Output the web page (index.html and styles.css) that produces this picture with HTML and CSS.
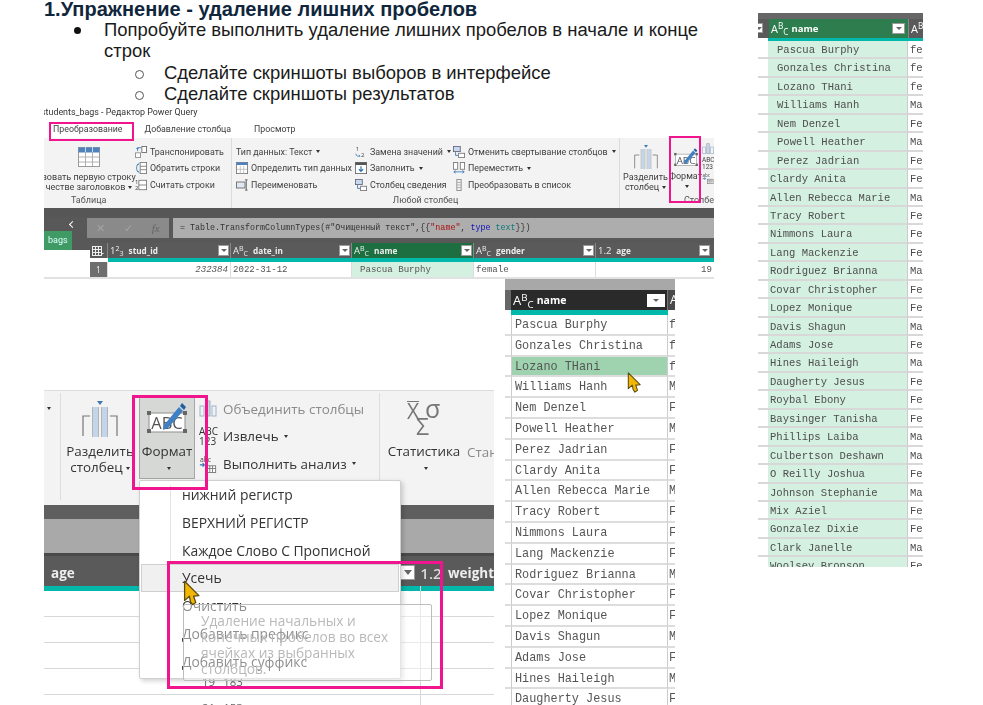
FILE: index.html
```html
<!DOCTYPE html>
<html lang="ru">
<head>
<meta charset="utf-8">
<title>Упражнение</title>
<link rel="stylesheet" href="styles.css">
</head>
<body>
<svg class="defs" width="0" height="0">
  <symbol id="cur" viewBox="0 0 16 24">
    <path d="M1.5 1 L1.5 19 L6 15 L7 20 L9 23 L12 21 L10 15 L15 14.5 Z" fill="#f2b705" stroke="#5c4a10" stroke-width="1.2" stroke-linejoin="round"/>
  </symbol>
  <symbol id="bigtable" viewBox="0 0 22 20">
    <rect x=".5" y=".5" width="21" height="19" fill="#fff" stroke="#9a9a9a"/>
    <rect x=".5" y=".5" width="21" height="5" fill="#4f81bd"/>
    <path d="M7.5 5v14M14.5 5v14M1 10h20M1 15h20" stroke="#b0b0b0" fill="none"/>
    <path d="M7.5 0v5M14.5 0v5" stroke="#c6d9ee" fill="none"/>
  </symbol>
  <symbol id="split" viewBox="0 0 36 36">
    <path d="M1 35V15H8M35 35V15H28" fill="none" stroke="#777" stroke-width="1.2"/>
    <rect x="11" y="6" width="5" height="30" fill="#c3d5e8"/>
    <rect x="20" y="6" width="5" height="30" fill="#c3d5e8"/>
    <path d="M10.5 36V6M16.5 36V6M19.5 36V6M25.5 36V6" stroke="#b4b4b4" fill="none"/>
    <path d="M15 0h6l-3 4z" fill="#3c78b4"/>
  </symbol>
  <symbol id="abc" viewBox="0 0 40 32">
    <rect x="2" y="12" width="36" height="19" fill="#fff" stroke="#8d8d8d"/>
    <rect x="0" y="10" width="4" height="4" fill="#666"/><rect x="36" y="10" width="4" height="4" fill="#666"/>
    <rect x="0" y="28" width="4" height="4" fill="#666"/><rect x="36" y="28" width="4" height="4" fill="#666"/>
    <text x="20" y="28" text-anchor="middle" class="abct">ABC</text>
    <path d="M17 24 L32 6 L36 10 L21 27 L16 29 Z" fill="#3f7fc4"/>
    <path d="M33 5 L35 2 L39 6 L37 9 Z" fill="#1f5f9f"/>
  </symbol>
  <symbol id="grid" viewBox="0 0 12 12">
    <rect x=".5" y="1.5" width="9" height="9" fill="none" stroke="#eee"/>
    <path d="M.5 4.5h9M.5 7.5h9M3.5 2v8M6.5 2v8" stroke="#eee"/>
    <path d="M9.5 8h2.5l-1.2 1.6z" fill="#eee"/>
  </symbol>
  <symbol id="trans" viewBox="0 0 14 14">
    <rect x="8" y=".5" width="5.5" height="7" fill="#fff" stroke="#666"/>
    <rect x=".5" y="8" width="6" height="5.5" fill="#fff" stroke="#888"/>
    <path d="M3 6V2h4M3 2 1.5 3.5M3 2l1 1.5" stroke="#3a78b8" fill="none"/>
  </symbol>
  <symbol id="rev" viewBox="0 0 14 14">
    <rect x="6" y=".5" width="7.5" height="13" fill="#fff" stroke="#777"/>
    <path d="M6 5h7.5M6 9h7.5" stroke="#777"/>
    <path d="M4.5 2C1 2 1 12 4.5 12M4.5 12 3 10M4.5 2 3 4" stroke="#3a78b8" fill="none"/>
  </symbol>
  <symbol id="count" viewBox="0 0 14 14">
    <rect x="4.5" y="1.5" width="9" height="11" fill="#fff" stroke="#777"/>
    <path d="M4.5 7h9" stroke="#777"/>
    <text x="0" y="6" class="tiny">1</text><text x="0" y="13" class="tiny">2</text>
  </symbol>
  <symbol id="detect" viewBox="0 0 14 14">
    <rect x=".5" y=".5" width="13" height="13" fill="#fff" stroke="#777"/>
    <rect x=".5" y=".5" width="13" height="3" fill="#4f81bd"/>
    <path d="M5 4.5v9M9 4.5v9M1 8.5h12" stroke="#bbb"/>
  </symbol>
  <symbol id="rename" viewBox="0 0 14 14">
    <rect x=".5" y="3.5" width="10" height="7" fill="#dfe8f2" stroke="#666"/>
    <path d="M12 1v12M10.5 1h3M10.5 13h3" stroke="#555" fill="none"/>
  </symbol>
  <symbol id="repl" viewBox="0 0 14 14">
    <text x="1" y="6" class="tiny">1</text><text x="7" y="13" class="tiny">2</text>
    <path d="M1 9c0 3 3 3 5 3M6 12 4.5 10.5" stroke="#3a78b8" fill="none"/>
  </symbol>
  <symbol id="fill" viewBox="0 0 14 14">
    <rect x=".5" y=".5" width="13" height="13" fill="#fff" stroke="#666"/>
    <rect x=".5" y=".5" width="13" height="3" fill="#555"/>
    <path d="M7 5v6M4.5 8.5 7 11l2.5-2.5" stroke="#2e74b5" stroke-width="1.4" fill="none"/>
  </symbol>
  <symbol id="pivot" viewBox="0 0 14 14">
    <rect x=".5" y=".5" width="8" height="6" fill="#c6d9ee" stroke="#667"/>
    <rect x="6.5" y="8.5" width="7" height="5" fill="#fff" stroke="#777"/>
    <path d="M3 7v4h3" stroke="#3a78b8" fill="none"/>
  </symbol>
  <symbol id="move" viewBox="0 0 14 14">
    <rect x=".5" y=".5" width="5" height="8" fill="#fff" stroke="#777"/>
    <rect x="8.5" y=".5" width="5" height="8" fill="#fff" stroke="#777"/>
    <path d="M1 11.5h12M1 11.5l2-1.5M1 11.5l2 1.5M13 11.5l-2-1.5M13 11.5l-2 1.5" stroke="#3a78b8" fill="none"/>
  </symbol>
  <symbol id="list" viewBox="0 0 14 14">
    <rect x="4.5" y=".5" width="5" height="13" fill="#f2f2f2" stroke="#888"/>
    <path d="M4.5 4h5M4.5 7h5M4.5 10h5" stroke="#aaa"/>
  </symbol>
  <symbol id="merge" viewBox="0 0 18 18">
    <rect x="1" y="6" width="4" height="10" fill="none" stroke="#9cb3cc"/>
    <rect x="13" y="6" width="4" height="10" fill="none" stroke="#9cb3cc"/>
    <rect x="7" y="1" width="4" height="15" fill="#c3d5e8" stroke="#aab"/>
  </symbol>
  <symbol id="anal" viewBox="0 0 18 20">
    <text x="0" y="8" class="tinyabc">abc</text>
    <path d="M0 11h5M3 9l2 2-2 2" stroke="#2e74b5" stroke-width="1.2" fill="none"/>
    <rect x="8" y="12" width="9.5" height="7.5" fill="#fff" stroke="#777"/>
    <path d="M8 15h9.5M11 12v7M14 12v7" stroke="#777"/>
  </symbol>
</svg>

<section class="doc">
  <h1 class="doc-title">1.Упражнение - удаление лишних пробелов</h1>
  <ul class="l1">
    <li><span class="l1-text">Попробуйте выполнить удаление лишних пробелов в начале и конце строк</span>
      <ul class="l2">
        <li>Сделайте скриншоты выборов в интерфейсе</li>
        <li>Сделайте скриншоты результатов</li>
      </ul>
    </li>
  </ul>
</section>

<svg class="cursor cursor-doc"><use href="#cur"/></svg>

<!-- Ribbon + table screenshot -->
<div class="shot shot-a">
  <div class="a-title">students_bags - Редактор Power Query</div>
  <div class="a-tabs">
    <span class="a-tab t1">Преобразование</span>
    <span class="a-tab t2">Добавление столбца</span>
    <span class="a-tab t3">Просмотр</span>
  </div>
  <div class="a-ribbon">
    <div class="a-group g-table">
      <div class="a-body">
        <div class="a-big big-first">
          <svg class="ic-bigtable"><use href="#bigtable"/></svg>
          <span>зовать первую строку</span>
          <span>честве заголовков<i class="car"></i></span>
        </div>
        <div class="a-col col-trans">
          <div class="a-item"><svg class="ic"><use href="#trans"/></svg>Транспонировать</div>
          <div class="a-item"><svg class="ic"><use href="#rev"/></svg>Обратить строки</div>
          <div class="a-item"><svg class="ic"><use href="#count"/></svg>Считать строки</div>
        </div>
      </div>
      <div class="a-label lbl-table">Таблица</div>
    </div>
    <div class="a-group g-any">
      <div class="a-body">
        <div class="a-col col-type">
          <div class="a-item">Тип данных: Текст<i class="car"></i></div>
          <div class="a-item"><svg class="ic"><use href="#detect"/></svg>Определить тип данных</div>
          <div class="a-item"><svg class="ic"><use href="#rename"/></svg>Переименовать</div>
        </div>
        <div class="a-col col-repl">
          <div class="a-item"><svg class="ic"><use href="#repl"/></svg>Замена значений<i class="car"></i></div>
          <div class="a-item"><svg class="ic"><use href="#fill"/></svg>Заполнить<i class="car"></i></div>
          <div class="a-item"><svg class="ic"><use href="#pivot"/></svg>Столбец сведения</div>
        </div>
        <div class="a-col col-unp">
          <div class="a-item"><svg class="ic"><use href="#pivot"/></svg>Отменить свертывание столбцов<i class="car"></i></div>
          <div class="a-item"><svg class="ic"><use href="#move"/></svg>Переместить<i class="car"></i></div>
          <div class="a-item"><svg class="ic"><use href="#list"/></svg>Преобразовать в список</div>
        </div>
      </div>
      <div class="a-label">Любой столбец</div>
    </div>
    <div class="a-group g-col">
      <div class="a-body">
        <div class="a-big big-split">
          <svg class="ic-split"><use href="#split"/></svg>
          <span>Разделить</span>
          <span>столбец<i class="car"></i></span>
        </div>
        <div class="a-big big-fmt">
          <svg class="ic-abc"><use href="#abc"/></svg>
          <span>Формат</span>
          <span><i class="car"></i></span>
        </div>
        <div class="a-extra">
          <svg class="ic-x"><use href="#merge"/></svg>
          <span>ABC<br>123</span>
          <svg class="ic-x"><use href="#anal"/></svg>
        </div>
      </div>
      <div class="a-label lbl-col">Столбец</div>
    </div>
  </div>
  <div class="a-strip"></div>
  <div class="a-fbar">
    <div class="a-queries"><i class="chev"></i><span class="a-qtab">bags</span></div>
    <div class="a-fbtns"><span class="fx-x">✕</span><span class="fx-c">✓</span><span class="fx-f">fx</span></div>
    <div class="a-finput">= Table.TransformColumnTypes(#"Очищенный текст",{{<b class="str">"name"</b>, <b class="typ">type</b> <b class="txt">text</b>}})</div>
  </div>
  <div class="a-grid-head">
    <div class="a-left"></div>
    <div class="ah ah-idx"><svg class="ic-h"><use href="#grid"/></svg></div>
    <div class="ah ah-1"><span class="ty">1<sup>2</sup><sub>3</sub></span><b>stud_id</b><i class="fb"></i></div>
    <div class="ah ah-2"><span class="ty">A<sup>B</sup><sub>C</sub></span><b>date_in</b><i class="fb"></i></div>
    <div class="ah ah-3"><span class="ty">A<sup>B</sup><sub>C</sub></span><b>name</b><i class="fb"></i></div>
    <div class="ah ah-4"><span class="ty">A<sup>B</sup><sub>C</sub></span><b>gender</b><i class="fb"></i></div>
    <div class="ah ah-5"><span class="ty">1.2</span><b>age</b><i class="fb"></i></div>
  </div>
  <div class="a-teal-row"><div class="a-blank"></div><div class="a-teal"></div></div>
  <div class="a-grid-row">
    <div class="a-blank"></div>
    <div class="ac ac-n">1</div>
    <div class="ac ac-1">232384</div>
    <div class="ac ac-2">2022-31-12</div>
    <div class="ac ac-3">Pascua Burphy</div>
    <div class="ac ac-4">female</div>
    <div class="ac ac-5">19</div>
  </div>
  <div class="pink p-tab"></div>
  <div class="pink p-fmt"></div>
</div>

<!-- Zoomed format menu -->
<div class="shot shot-b">
  <div class="b-ribbon">
    <i class="car b-car0"></i>
    <div class="b-sep b-sep-1"></div>
    <div class="b-big b-split">
      <svg class="ic-bsplit"><use href="#split"/></svg>
      <span>Разделить</span>
      <span>столбец<i class="car"></i></span>
    </div>
    <div class="b-big b-fmt">
      <svg class="ic-babc"><use href="#abc"/></svg>
      <span>Формат</span>
      <span><i class="car"></i></span>
    </div>
    <div class="b-col">
      <div class="b-item off"><svg class="ic-b"><use href="#merge"/></svg>Объединить столбцы</div>
      <div class="b-item"><span class="b-ab">ABC<br>123</span>Извлечь<i class="car"></i></div>
      <div class="b-item"><svg class="ic-b"><use href="#anal"/></svg>Выполнить анализ<i class="car"></i></div>
    </div>
    <div class="b-sep"></div>
    <div class="b-big b-stat">
      <span class="stat-icon"><span class="st-x">X</span><span class="st-s">σ</span><span class="st-e">Σ</span></span>
      <span>Статистика</span>
      <span><i class="car"></i></span>
    </div>
    <span class="b-more">Стандарт</span>
  </div>
  <div class="b-strip"></div>
  <div class="b-gray"></div>
  <div class="b-sep2"></div>
  <div class="b-head">
    <b class="b-age">age</b>
    <i class="fb fb-b"></i>
    <span class="b-12">1.2</span>
    <b class="b-weight">weight</b>
  </div>
  <div class="b-teal"></div>
  <div class="b-rows">
    <div class="b-row"></div><div class="b-row"></div><div class="b-row"></div>
    <div class="b-row b-num"><span>19</span><span>183</span></div>
    <div class="b-row b-num"><span>21</span><span>153</span></div>
  </div>
  <div class="menu">
    <div class="m-gutter"></div>
    <div class="m-item">нижний регистр</div>
    <div class="m-item">ВЕРХНИЙ РЕГИСТР</div>
    <div class="m-item">Каждое Слово С Прописной</div>
    <div class="m-item hov">Усечь</div>
    <div class="m-item">Очистить</div>
    <div class="m-item">Добавить префикс</div>
    <div class="m-item">Добавить суффикс</div>
  </div>
  <div class="tip">Удаление начальных и<br>конечных пробелов во всех<br>ячейках из выбранных<br>столбцов.</div>
  <div class="pink p-bfmt"></div>
  <div class="pink p-btrim"></div>
  <svg class="cursor cursor-b"><use href="#cur"/></svg>
</div>

<!-- Middle table -->
<div class="shot shot-c">
  <div class="c-top"></div>
  <div class="c-head">
    <div class="c-hl"></div>
    <div class="c-hname"><span class="ty">A<sup>B</sup><sub>C</sub></span><b>name</b><i class="fb"></i></div>
    <div class="c-hnext"><span class="ty">A</span></div>
  </div>
  <div class="c-teal"><div class="c-tl"></div><div class="c-tm"></div></div>
  <div class="c-rows">
    <div class="c-row"><span></span><span>Pascua Burphy</span><span>f</span></div>
    <div class="c-row"><span></span><span>Gonzales Christina</span><span>f</span></div>
    <div class="c-row sel"><span></span><span>Lozano THani</span><span>f</span></div>
    <div class="c-row"><span></span><span>Williams Hanh</span><span>M</span></div>
    <div class="c-row"><span></span><span>Nem Denzel</span><span>F</span></div>
    <div class="c-row"><span></span><span>Powell Heather</span><span>M</span></div>
    <div class="c-row"><span></span><span>Perez Jadrian</span><span>F</span></div>
    <div class="c-row"><span></span><span>Clardy Anita</span><span>F</span></div>
    <div class="c-row"><span></span><span>Allen Rebecca Marie</span><span>M</span></div>
    <div class="c-row"><span></span><span>Tracy Robert</span><span>F</span></div>
    <div class="c-row"><span></span><span>Nimmons Laura</span><span>F</span></div>
    <div class="c-row"><span></span><span>Lang Mackenzie</span><span>F</span></div>
    <div class="c-row"><span></span><span>Rodriguez Brianna</span><span>M</span></div>
    <div class="c-row"><span></span><span>Covar Christopher</span><span>F</span></div>
    <div class="c-row"><span></span><span>Lopez Monique</span><span>F</span></div>
    <div class="c-row"><span></span><span>Davis Shagun</span><span>M</span></div>
    <div class="c-row"><span></span><span>Adams Jose</span><span>F</span></div>
    <div class="c-row"><span></span><span>Hines Haileigh</span><span>M</span></div>
    <div class="c-row"><span></span><span>Daugherty Jesus</span><span>F</span></div>
  </div>
  <svg class="cursor cursor-c"><use href="#cur"/></svg>
</div>

<!-- Right table -->
<div class="shot shot-d">
  <div class="d-top"></div>
  <div class="d-head">
    <i class="fb fb-d0"></i>
    <div class="d-hname"><span class="ty">A<sup>B</sup><sub>C</sub></span><b>name</b><i class="fb"></i></div>
    <div class="d-hnext"><span class="ty">A<sup>B</sup><sub>C</sub></span></div>
  </div>
  <div class="d-teal"></div>
  <div class="d-rows">
    <div class="d-row in"><span></span><span>Pascua Burphy</span><span>fe</span></div>
    <div class="d-row in"><span></span><span>Gonzales Christina</span><span>fe</span></div>
    <div class="d-row in"><span></span><span>Lozano THani</span><span>fe</span></div>
    <div class="d-row in"><span></span><span>Williams Hanh</span><span>Ma</span></div>
    <div class="d-row in"><span></span><span>Nem Denzel</span><span>Fe</span></div>
    <div class="d-row in"><span></span><span>Powell Heather</span><span>Ma</span></div>
    <div class="d-row in"><span></span><span>Perez Jadrian</span><span>Fe</span></div>
    <div class="d-row"><span></span><span>Clardy Anita</span><span>Fe</span></div>
    <div class="d-row"><span></span><span>Allen Rebecca Marie</span><span>Ma</span></div>
    <div class="d-row"><span></span><span>Tracy Robert</span><span>Fe</span></div>
    <div class="d-row"><span></span><span>Nimmons Laura</span><span>Fe</span></div>
    <div class="d-row"><span></span><span>Lang Mackenzie</span><span>Fe</span></div>
    <div class="d-row"><span></span><span>Rodriguez Brianna</span><span>Ma</span></div>
    <div class="d-row"><span></span><span>Covar Christopher</span><span>Fe</span></div>
    <div class="d-row"><span></span><span>Lopez Monique</span><span>Fe</span></div>
    <div class="d-row"><span></span><span>Davis Shagun</span><span>Ma</span></div>
    <div class="d-row"><span></span><span>Adams Jose</span><span>Fe</span></div>
    <div class="d-row"><span></span><span>Hines Haileigh</span><span>Ma</span></div>
    <div class="d-row"><span></span><span>Daugherty Jesus</span><span>Fe</span></div>
    <div class="d-row"><span></span><span>Roybal Ebony</span><span>Fe</span></div>
    <div class="d-row"><span></span><span>Baysinger Tanisha</span><span>Fe</span></div>
    <div class="d-row"><span></span><span>Phillips Laiba</span><span>Ma</span></div>
    <div class="d-row"><span></span><span>Culbertson Deshawn</span><span>Ma</span></div>
    <div class="d-row"><span></span><span>O Reilly Joshua</span><span>Fe</span></div>
    <div class="d-row"><span></span><span>Johnson Stephanie</span><span>Ma</span></div>
    <div class="d-row"><span></span><span>Mix Aziel</span><span>Fe</span></div>
    <div class="d-row"><span></span><span>Gonzalez Dixie</span><span>Fe</span></div>
    <div class="d-row"><span></span><span>Clark Janelle</span><span>Ma</span></div>
    <div class="d-row"><span></span><span>Woolsey Bronson</span><span>Fe</span></div>
  </div>
</div>
</body>
</html>
```

FILE: styles.css
```css
* { box-sizing: border-box; }
html, body { margin: 0; padding: 0; }
body {
  width: 983px; height: 705px; position: relative; overflow: hidden;
  background: #fff; font-family: "Liberation Sans", Arial, sans-serif; color: #111;
}
.defs { position: absolute; }
.abct { font: 16.5px "Open Sans", sans-serif; fill: #555; }
.tiny { font: 7px "Open Sans", sans-serif; fill: #444; }
.tinyabc { font: 7.5px "Open Sans", sans-serif; fill: #444; }

/* Document text */
.doc { padding: 0 0 0 44px; }
.doc-title { margin: 0; font-size: 20px; line-height: 19px; font-weight: 700; color: #10263c; }
.l1, .l2 { list-style: none; margin: 0; padding: 0; font-size: 18.45px; line-height: 21.3px; color: #1a1a1a; }
.l1 > li { position: relative; padding-left: 60px; }
.l1 > li::before { content: ""; position: absolute; left: 30px; top: 8px; width: 7px; height: 7px; border-radius: 50%; background: #111; }
.l1-text { display: block; width: 625px; }
.l2 > li { position: relative; padding-left: 60px; }
.l2 > li::before { content: ""; position: absolute; left: 31px; top: 8px; width: 7px; height: 7px; border-radius: 50%; border: 1px solid #555; }

.shot { position: absolute; overflow: hidden; filter: blur(.3px); }
.cursor { position: absolute; overflow: visible; }
.cursor-doc { left: 600px; top: 119px; width: 11px; height: 15px; }
.pink { position: absolute; border: 2px solid #f0158c; }

.ty { font-family: "Open Sans", sans-serif; }
.ty sup { font-size: .75em; vertical-align: .45em; line-height: 0; }
.ty sub { font-size: .75em; vertical-align: -.3em; line-height: 0; }
.fb { display: flex; align-items: center; justify-content: center; background: #fff; border: 1px solid #9a9a9a; flex: none; }
.fb::after { content: ""; border-left: 3px solid transparent; border-right: 3px solid transparent; border-top: 3px solid #666; }
.car { display: inline-block; margin-left: 3px; vertical-align: middle; border-left: 2.5px solid transparent; border-right: 2.5px solid transparent; border-top: 3px solid #333; }

/* Shot A */
.shot-a { left: 44px; top: 105px; width: 670px; height: 174px; display: flex; flex-direction: column; background: #fff; font-family: Roboto, sans-serif; color: #3f3f3f; font-size: 9px; }
.a-title { height: 15px; line-height: 15px; font-size: 8.9px; color: #333; margin-left: -3px; white-space: nowrap; }
.a-tabs { height: 18px; display: flex; align-items: center; padding-left: 9px; font-size: 8.8px; }
.a-tab { white-space: nowrap; }
.t2 { margin-left: 22px; }
.t3 { margin-left: 23px; }
.a-ribbon { height: 70px; background: #f3f3f3; display: flex; }
.a-group { display: flex; flex-direction: column; border-right: 1px solid #dcdcdc; flex: none; }
.a-body { flex: 1; display: flex; min-height: 0; }
.a-label { height: 14px; line-height: 12px; font-size: 9px; text-align: center; white-space: nowrap; overflow: hidden; color: #555; }
.g-table { width: 188px; }
.lbl-table { text-align: left; padding-left: 27px; }
.g-any { width: 388px; }
.g-col { width: 94px; border: 0; }
.lbl-col { text-align: left; padding-left: 64px; }
.a-big { display: flex; flex-direction: column; align-items: center; white-space: nowrap; line-height: 10px; font-size: 9px; }
.big-first { width: 90px; padding-top: 9px; flex: none; }
.ic-bigtable { width: 22px; height: 20px; margin-bottom: 5px; }
.a-col { display: flex; flex-direction: column; padding-top: 5.5px; flex: none; }
.a-item { height: 16.5px; display: flex; align-items: center; white-space: nowrap; font-size: 8.9px; }
.a-item .car { margin-left: 4px; }
.ic { width: 12px; height: 12px; margin-right: 3px; flex: none; }
.col-trans { padding-left: 1px; }
.col-type { width: 123px; padding-left: 4px; }
.col-repl { width: 98px; }
.big-split { width: 47px; margin-left: 2px; padding-top: 7px; flex: none; }
.ic-split { width: 24px; height: 24px; margin-bottom: 3px; }
.big-fmt { width: 33px; padding-top: 9px; flex: none; }
.ic-abc { width: 24px; height: 19px; margin-bottom: 5px; }
.a-extra { display: flex; flex-direction: column; font-size: 6.5px; line-height: 6.5px; padding-top: 5px; gap: 2px; color: #444; }
.ic-x { width: 12px; height: 12px; }
.a-strip { height: 9px; background: #565656; }
.a-fbar { height: 26px; background: #585858; display: flex; padding-top: 1px; }
.a-queries { width: 43px; position: relative; flex: none; }
.chev { position: absolute; right: 12px; top: 4px; width: 5px; height: 5px; border-left: 1.5px solid #fff; border-bottom: 1.5px solid #fff; transform: rotate(45deg); }
.a-qtab { position: absolute; z-index: 2; left: 0; top: 13px; width: 28px; height: 19px; background: #3f9a63; color: #dff; font-size: 9px; line-height: 19px; padding-left: 4px; }
.a-fbtns { width: 82px; height: 20px; margin-right: 4px; background: #8a8a8a; color: #a5a5a5; display: flex; align-items: center; justify-content: space-around; font-size: 11px; flex: none; }
.fx-f { font-family: "Liberation Serif", serif; font-style: italic; color: #666; }
.a-finput { flex: 1; height: 20px; background: #adadad; color: #333; font: 8.35px/20px "Liberation Mono", monospace; padding-left: 7px; white-space: nowrap; }
.a-finput b { font-weight: 400; }
.str { color: #a11; }
.typ { color: #11b; }
.txt { color: #0a7a7a; }
.a-grid-head { height: 15px; display: flex; background: #505050; color: #eee; font-size: 8px; font-family: "Open Sans", sans-serif; }
.a-left { width: 46px; flex: none; background: linear-gradient(#585858 7px, #fff 7px); }
.ah { display: flex; align-items: center; gap: 5px; padding: 0 1px 0 2px; border-right: 1px solid #888; flex: none; background: #5a5a5a; }
.ah b { font-weight: 700; flex: 1; font-size: 8.2px; }
.ah .fb { width: 11px; height: 11px; }
.ah .ty { font-size: 9.5px; }
.ic-h { width: 12px; height: 12px; }
.ah-idx { width: 18px; }
.ah-1 { width: 123px; }
.ah-2 { width: 121px; }
.ah-3 { width: 122px; background: #1d6f42; }
.ah-4 { width: 122px; }
.ah-5 { width: 118px; border: 0; padding-right: 4px; }
.a-teal-row { height: 4px; display: flex; }
.a-teal { flex: 1; background: #01b8aa; margin-left: 18px; }
.a-grid-row { height: 17px; display: flex; font: 9.1px/15px "Liberation Mono", monospace; color: #555; border-bottom: 2px solid #e2e2e2; }
.a-blank { width: 46px; flex: none; background: #fff; }
.ac { flex: none; padding: 0 2px; border-right: 1px solid #ddd; white-space: nowrap; }
.ac-n { width: 18px; background: #6e6e6e; color: #eee; font-family: "Open Sans", sans-serif; text-align: center; font-size: 8.5px; }
.ac-1 { width: 123px; text-align: right; font-style: italic; }
.ac-2 { width: 121px; }
.ac-3 { width: 122px; background: #d4f0e0; padding-left: 8px; }
.ac-4 { width: 122px; }
.ac-5 { width: 118px; text-align: right; border: 0; }
.p-tab { left: 5px; top: 17px; width: 85px; height: 19px; }
.p-fmt { left: 625px; top: 31px; width: 32px; height: 67px; }

/* Shot B */
.shot-b { left: 44px; top: 390px; width: 450px; height: 315px; display: flex; flex-direction: column; background: #fff; font-family: "Open Sans", sans-serif; }
.b-ribbon { height: 115px; flex: none; background: #f3f3f3; border-top: 1px solid #ddd; display: flex; position: relative; color: #333; font-size: 13.4px; white-space: nowrap; }
.b-car0 { position: absolute; left: 0; top: 16px; }
.b-sep { width: 1px; height: 107px; margin-top: 2px; background: #ddd; flex: none; }
.b-sep-1 { margin-left: 16px; }
.b-big { display: flex; flex-direction: column; align-items: center; line-height: 16px; flex: none; }
.b-split { width: 76px; margin-left: 1px; padding-top: 10px; }
.ic-bsplit { width: 36px; height: 36px; margin-bottom: 6px; }
.b-fmt { width: 56px; height: 82px; margin: 6px 0 0 1px; padding-top: 4px; background: #d6d8d6; border: 1px solid #a6a6a6; border-top: 0; }
.ic-babc { width: 40px; height: 32px; margin-bottom: 10px; }
.b-col { width: 184px; padding-top: 4px; flex: none; }
.b-item { height: 27.5px; display: flex; align-items: center; }
.b-item .car { margin-left: 5px; }
.b-item.off { color: #8a8a8a; }
.ic-b { width: 18px; height: 18px; margin: 0 6px 0 4px; flex: none; }
.b-ab { width: 18px; margin: 0 6px 0 4px; font-size: 10px; line-height: 10px; flex: none; }
.stat-icon { position: relative; width: 36px; height: 36px; margin: 10px 0 6px; color: #777; display: block; line-height: 1; }
.st-x { position: absolute; left: 1px; top: 0; font-size: 21px; line-height: 19px; border-top: 1.5px solid #777; }
.st-s { position: absolute; left: 19px; top: -5px; font-size: 25px; }
.st-e { position: absolute; left: 10px; top: 14px; font-size: 23px; }
.b-stat { width: 88px; }
.b-more { color: #8a8a8a; padding-top: 52px; margin-left: -1px; }
.b-strip { height: 14px; flex: none; background: #5f5f5f; }
.b-gray { height: 34px; flex: none; background: #a9a9a9; }
.b-sep2 { height: 3px; flex: none; background: #4a4a4a; }
.b-head { height: 30px; flex: none; background: #5a5a5a; color: #eee; display: flex; align-items: center; font-size: 13.5px; padding: 3px 0 0 7px; }
.b-age { width: 354px; font-weight: 700; }
.fb-b { width: 15px; height: 15px; margin-right: 5px; }
.fb-b::after { border-left-width: 4px; border-right-width: 4px; border-top-width: 5px; }
.b-12 { width: 28px; font-weight: 600; color: #d8d8d8; font-size: 15px; }
.b-weight { font-weight: 700; }
.b-teal { height: 5px; flex: none; background: #01b8aa; }
.b-rows { flex: 1; }
.b-row { height: 26px; border-bottom: 1.5px solid #d8d8d8; position: relative; }
.b-num { font: 11.5px/26px "Open Sans", sans-serif; color: #666; display: flex; gap: 8px; padding-left: 158px; }
.b-rows::before { content: ""; position: absolute; left: 376px; top: 196px; bottom: 0; width: 1px; background: #d8d8d8; }
.menu { position: absolute; left: 95px; top: 90px; width: 262px; height: 199px; background: #fff; border: 1px solid #d0d0d0; border-radius: 2px; box-shadow: 2px 2px 5px rgba(0,0,0,.18); font-size: 13.9px; color: #333; }
.m-gutter { position: absolute; left: 30px; top: 4px; width: 1px; height: 80px; background: #e4e4e4; }
.m-item { height: 27.8px; line-height: 27.8px; padding-left: 41px; margin: 0 1px; position: relative; white-space: nowrap; }
.m-item.hov { background: #f0f0f0; border: 1px solid #cfcfcf; padding-left: 40px; line-height: 26px; }
.tip { position: absolute; left: 139px; top: 214px; width: 249px; height: 77px; padding: 8px 0 0 17px; border: 1px solid #bdbdbd; border-radius: 2px; background: rgba(255,255,255,.45); color: #b9b9b9; font-size: 13.7px; line-height: 16px; white-space: nowrap; }
.p-bfmt { left: 88px; top: 5px; width: 76px; height: 95px; border-width: 3px; }
.p-btrim { left: 123px; top: 171px; width: 276px; height: 128px; border-width: 3px; }
.cursor-b { left: 139px; top: 190px; width: 17px; height: 26px; }

/* Shot C */
.shot-c { left: 505px; top: 279px; width: 170px; height: 426px; background: #fff; display: flex; flex-direction: column; }
.c-top { height: 11px; flex: none; background: #a8a8a8; }
.c-head { height: 20px; flex: none; display: flex; background: #2a2a2a; color: #fff; font-family: "Open Sans", sans-serif; }
.c-hl { width: 6px; background: #666; flex: none; }
.c-hname { width: 157px; display: flex; align-items: center; padding: 0 2px 0 2px; gap: 3px; flex: none; border-right: 1px solid #777; }
.c-hname b { flex: 1; font-weight: 700; font-size: 10.5px; }
.c-hname .ty { font-size: 13px; }
.c-hname .fb { width: 18px; height: 13px; border: 0; }
.c-hnext { flex: 1; background: #4a4a4a; padding-left: 2px; font-size: 12px; line-height: 20px; overflow: hidden; }
.c-teal { height: 5px; flex: none; display: flex; }
.c-tl { width: 6px; }
.c-tm { width: 157px; background: #01b8aa; }
.c-rows { flex: 1; font: 11.85px/20.8px "Liberation Mono", monospace; color: #555; }
.c-row { display: grid; grid-template-columns: 6px 157px 1fr; height: 20.8px; }
.c-row > span { border-bottom: 2px solid #ddd; white-space: nowrap; overflow: hidden; }
.c-row > span:nth-child(2) { border-left: 1px solid #ccc; border-right: 1px solid #ccc; padding-left: 3px; }
.c-row > span:nth-child(3) { padding-left: 1px; }
.c-row.sel > span:nth-child(2) { background: #9fd3b0; }
.cursor-c { left: 122px; top: 93px; width: 14px; height: 21px; }

/* Shot D */
.shot-d { left: 758px; top: 13px; width: 165px; height: 554px; background: #fff; display: flex; flex-direction: column; }
.d-top { height: 6px; flex: none; background: #666; }
.d-head { height: 19px; flex: none; display: flex; background: #5a5a5a; color: #fff; font-family: "Open Sans", sans-serif; position: relative; }
.fb-d0 { position: absolute; left: -4px; top: 4px; width: 9px; height: 10px; }
.d-hname { width: 139px; margin-left: 11px; flex: none; background: #2e7d4f; display: flex; align-items: center; gap: 3px; padding: 0 3px 0 2px; }
.d-hname b { flex: 1; font-weight: 700; font-size: 9.5px; }
.d-hname .ty { font-size: 11px; }
.d-hname .fb { width: 13px; height: 11px; }
.d-hnext { flex: 1; padding-left: 2px; font-size: 11px; line-height: 19px; overflow: hidden; border-left: 1px solid #888; }
.d-teal { height: 3px; flex: none; margin-left: 10px; background: #01b8aa; }
.d-rows { flex: 1; font: 10.55px/18.45px "Liberation Mono", monospace; color: #4e4e4e; overflow: hidden; }
.d-row { display: grid; grid-template-columns: 10px 140px 1fr; height: 18.45px; }
.d-row > span { border-bottom: 2px solid #d8d8d8; white-space: nowrap; overflow: hidden; }
.d-row > span:nth-child(2) { background: #d4f0e0; padding-left: 2px; border-right: 1px solid #ccc; }
.d-row.in > span:nth-child(2) { padding-left: 9px; }
.d-row > span:nth-child(3) { padding-left: 2px; }
```
